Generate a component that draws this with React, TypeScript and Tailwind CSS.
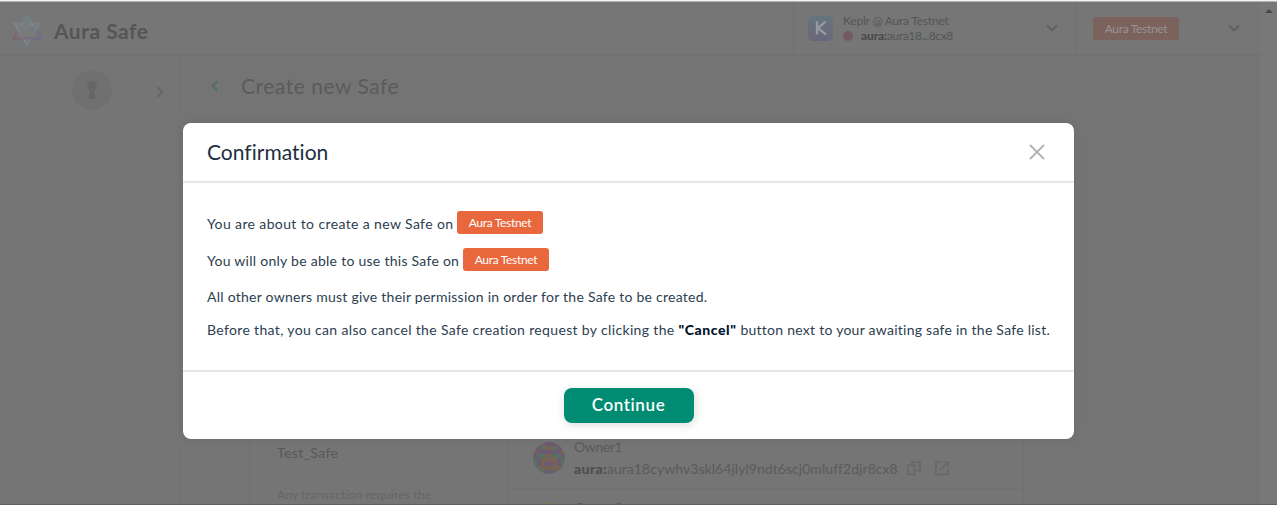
import type { ReactNode } from "react";

function Chevron({ className }: { className: string }) {
  return (
    <svg viewBox="0 0 12 8" className={className} fill="none" stroke="currentColor" strokeWidth="2">
      <path d="M0.8 1.2 L6 6.4 L11.2 1.2" />
    </svg>
  );
}

function AuraLogo() {
  return (
    <svg viewBox="0 0 30 32" className="mt-[5px] h-8 w-[30px] shrink-0" fill="none" strokeLinejoin="round">
      <defs>
        <linearGradient id="aura" x1="0" y1="0.3" x2="1" y2="0.7">
          <stop offset="0" stopColor="#8b8588" />
          <stop offset="0.5" stopColor="#828d90" />
          <stop offset="1" stopColor="#6c7d98" />
        </linearGradient>
        <linearGradient id="auraUp" x1="0.5" y1="0" x2="0.5" y2="1">
          <stop offset="0" stopColor="#6c8a89" />
          <stop offset="0.55" stopColor="#76808a" />
          <stop offset="1" stopColor="#7c6878" />
        </linearGradient>
      </defs>
      <path d="M15 30.5 L1.5 8 H28.5 Z" stroke="url(#aura)" strokeWidth="1.2" strokeDasharray="1.2 0.6" />
      <path d="M15 28.5 L3 9.3 H27 Z" stroke="url(#aura)" strokeWidth="1.1" strokeDasharray="1.2 0.6" />
      <path d="M15 26.5 L4.5 10.6 H25.5 Z" stroke="url(#aura)" strokeWidth="1" strokeDasharray="1.2 0.6" />
      <path d="M13.5 1 Q15 -0.5 16.5 1 L28.8 22.6 Q29 24 27.5 24 H2.5 Q1 24 1.2 22.6 Z" stroke="url(#auraUp)" strokeWidth="0.9" />
      <path d="M15 2.5 L26 22.8 H4 Z" stroke="url(#auraUp)" strokeWidth="1.1" />
      <path d="M15 5.5 L23.5 22 H6.5 Z" fill="#797b7b" />
      <path d="M5 16.5 L1.5 22.6 Q1 24 2.5 24 H9" stroke="#855e64" strokeWidth="1.2" />
      <path d="M25 16.5 L28.5 22.6 Q29 24 27.5 24 H19" stroke="#606f91" strokeWidth="1.2" />
    </svg>
  );
}

const PIXELS = [
  "ooopppoo",
  "ppgoogpp",
  "oppppppo",
  "pggooggp",
  "gpoooopg",
  "gpoppopg",
  "ogooooog",
  "oogppgoo",
];
const PIXEL_COLORS: Record<string, string> = { p: "#6c5a72", g: "#587064", o: "#766355" };
const GOLD_COLORS: Record<string, string> = { p: "#7a784c", g: "#6b6e52", o: "#77754d" };

function Identicon({ className, id, colors = PIXEL_COLORS }: { className: string; id: string; colors?: Record<string, string> }) {
  return (
    <svg viewBox="0 0 8 8" className={className} shapeRendering="crispEdges">
      <clipPath id={id}>
        <circle cx="4" cy="4" r="4" />
      </clipPath>
      <g clipPath={`url(#${id})`}>
        {PIXELS.map((row, y) =>
          row.split("").map((c, x) => <rect key={`${x}-${y}`} x={x} y={y} width="1" height="1" fill={colors[c]} />)
        )}
      </g>
    </svg>
  );
}

function NetworkTag({ className }: { className: string }) {
  return (
    <span className={`inline-flex h-[23px] w-[86px] shrink-0 items-center justify-center rounded-[3px] pt-px text-[12px] tracking-[-0.31px] ${className}`}>
      Aura Testnet
    </span>
  );
}

function Header() {
  return (
    <header className="flex h-[54px] shrink-0 border-b-2 border-[#727272] bg-[#767676]">
      <div className="flex flex-1 items-center pl-3">
        <AuraLogo />
        <span className="ml-3 pt-[5px] text-[21px] leading-6 font-bold tracking-[0.5px] text-[#555555]">Aura Safe</span>
      </div>
      <div className="flex w-[282px] items-center border-l border-[#707070] pl-[14px] text-[12px] text-[#535658]">
        <div className="flex h-[25px] w-[25px] items-center justify-center rounded-[5px] bg-gradient-to-b from-[#65757f] to-[#6b667a]">
          <svg viewBox="0 0 12 14" className="h-[14px] w-3" fill="none" stroke="#989b9e" strokeWidth="2.3">
            <path d="M2 .5 V13.5 M10.5 .5 L3 7.2 L11 13.5" />
          </svg>
        </div>
        <div className="ml-[10px] flex flex-col">
          <span className="leading-[15px] tracking-[-0.2px]">Keplr @ Aura Testnet</span>
          <span className="flex items-center leading-[15px]">
            <Identicon id="account" className="mr-2 h-[10px] w-[10px]" colors={{ p: "#755463", g: "#6b5f75", o: "#7b5959" }} />
            <b className="font-black tracking-[-0.13px] text-[#494b4d]">aura:</b>
            <span className="tracking-[-0.4px]">aura18...8cx8</span>
          </span>
        </div>
        <Chevron className="mr-[17px] ml-auto h-2 w-3 text-[#606060]" />
      </div>
      <div className="flex w-[185px] items-center border-l border-[#707070] pl-[17px]">
        <NetworkTag className="bg-[#7b625d] text-[#989491]" />
        <Chevron className="mr-5 ml-auto h-2 w-3 text-[#606060]" />
      </div>
    </header>
  );
}

function Sidebar() {
  return (
    <aside className="flex w-[180px] shrink-0 border-r border-[#727272] bg-[#757575]">
      <div className="mt-[14px] ml-[72px] flex h-10 w-10 shrink-0 items-center justify-center rounded-full bg-[#707070]">
        <svg viewBox="0 0 10 18" className="h-[18px] w-[10px]" fill="#666666">
          <path d="M5 0 A4.8 4.8 0 0 1 7 9.2 L8.5 18 H1.5 L3 9.2 A4.8 4.8 0 0 1 5 0 Z" />
        </svg>
      </div>
      <svg viewBox="0 0 8 12" className="mt-[30px] ml-[44px] h-3 w-2" fill="none" stroke="#666666" strokeWidth="1.8">
        <path d="M1.2 1.2 L6.3 6 L1.2 10.8" />
      </svg>
    </aside>
  );
}

function OwnerRow({ name, colors, children }: { name: string; colors?: Record<string, string>; children?: ReactNode }) {
  return (
    <div className="flex h-[61px] shrink-0 border-b-2 border-[#727272] pt-[13px] pl-6">
      <Identicon id={name} className="h-8 w-8 shrink-0" colors={colors} />
      <div className="-mt-[6px] ml-[9px] flex flex-col">
        <span className="leading-[22px] tracking-[-0.4px]">{name}</span>
        {children}
      </div>
    </div>
  );
}

function Owners() {
  return (
    <div className="flex flex-1 flex-col overflow-hidden border-l border-[#717171] text-[14px] text-[#5a5b5b]">
      <OwnerRow name="Owner1">
        <span className="flex items-center leading-[22px]">
          <b className="font-black tracking-[0.37px] text-[#4e4f50]">aura:</b>
          <span className="tracking-[0.05px]">aura18cywhv3skl64jlyl9ndt6scj0mluff2djr8cx8</span>
          <svg viewBox="0 0 16 16" className="-mt-[2px] ml-2 h-4 w-4" fill="none" stroke="#676767" strokeWidth="1.7" strokeLinejoin="round">
            <path d="M6 5 V2 H14 V10.5 H9.5 M2 5 H8.5 V14.5 H2 Z" />
          </svg>
          <svg viewBox="0 0 16 16" className="-mt-[2px] ml-3 h-4 w-4" fill="none" stroke="#676767" strokeWidth="1.6">
            <path d="M6.5 2 H2 V14.5 H14 V9.5 M9.5 2 H14 V6.5 M14 2 L5.5 10.5" />
          </svg>
        </span>
      </OwnerRow>
      <OwnerRow name="Owner2" colors={GOLD_COLORS} />
    </div>
  );
}

function Page() {
  return (
    <main className="flex flex-1 flex-col bg-[#747474]">
      <div className="flex h-[62px] shrink-0 items-center pl-[31px]">
        <svg viewBox="0 0 8 12" className="-mt-[2px] h-3 w-2" fill="none" stroke="#4f6d66" strokeWidth="2">
          <path d="M6.5 1.2 L1.8 6 L6.5 10.8" />
        </svg>
        <h1 className="-mt-[2px] ml-[22px] text-[21px] leading-6 tracking-[0.53px] text-[#5a5b5d]">Create new Safe</h1>
      </div>
      <div className="mt-[311px] ml-[70px] flex min-h-0 w-[774px] flex-1 border-x border-[#717171] bg-[#757575]">
        <div className="flex w-[257px] flex-col pt-[14px] pl-[26px]">
          <span className="text-[14px] leading-5 tracking-[0.38px] text-[#585959]">Test_Safe</span>
          <span className="mt-[22px] text-[12px] leading-5 tracking-[0.22px] text-[#656565]">Any transaction requires the</span>
        </div>
        <Owners />
      </div>
    </main>
  );
}

function Dialog() {
  return (
    <section role="dialog" className="absolute top-[123px] left-[183px] flex h-[316px] w-[891px] flex-col rounded-lg bg-white text-[#001428] shadow-[0_0_10px_rgba(0,0,0,0.08)]">
      <div className="flex h-[60px] shrink-0 items-center justify-between border-b-2 border-[#e8e7e6] pr-[29px] pl-6">
        <h2 className="text-[21px] leading-6 tracking-[0.02px] text-[#1c2f42]">Confirmation</h2>
        <svg viewBox="0 0 16 16" className="h-4 w-4" fill="none" stroke="#b2b5b2" strokeWidth="2" strokeLinecap="round">
          <path d="M1.5 1.5 L14.5 14.5 M14.5 1.5 L1.5 14.5" />
        </svg>
      </div>
      <div className="flex flex-1 flex-col pt-7 pl-6 text-[14px] leading-5 text-[#2c3e50]">
        <p className="flex h-[23px] items-center gap-[3px]">
          <span className="w-[247px] pt-[3px] whitespace-nowrap tracking-[0.38px]">You are about to create a new Safe on</span>
          <NetworkTag className="bg-[#e8673c] text-white" />
        </p>
        <p className="mt-[14px] flex h-[23px] items-center gap-[3px]">
          <span className="w-[253px] pt-[3px] whitespace-nowrap tracking-[0.27px]">You will only be able to use this Safe on</span>
          <NetworkTag className="bg-[#e8673c] text-white" />
        </p>
        <p className="mt-4 tracking-[0.255px]">All other owners must give their permission in order for the Safe to be created.</p>
        <p className="mt-[13px] whitespace-nowrap tracking-[0.345px]">
          Before that, you can also cancel the Safe creation request by clicking the{" "}
          <b className="font-black tracking-[0.57px] text-[#001428]">"Cancel"</b>{" "}
          <span className="tracking-[0.26px]">button next to your awaiting safe in the Safe list.</span>
        </p>
      </div>
      <div className="flex h-[69px] shrink-0 justify-center border-t-2 border-[#e8e7e6] pt-4">
        <button className="h-[35px] w-[130px] rounded-lg bg-[#008c73] pb-[2px] text-[17px] leading-5 font-semibold tracking-[0.6px] text-white shadow-[1px_2px_10px_rgba(40,54,61,0.18)]">
          Continue
        </button>
      </div>
    </section>
  );
}

export default function App() {
  return (
    <div className="relative flex h-[505px] w-[1277px] flex-col overflow-hidden border-b border-[#626262] bg-[#757575] font-['Lato',sans-serif]">
      <div className="h-[2px] shrink-0 border-b border-[#b4b6b5] bg-[#f1f3f2]" />
      <div className="flex min-h-0 flex-1">
        <div className="flex w-[1260px] flex-col">
          <Header />
          <div className="flex min-h-0 flex-1">
            <Sidebar />
            <Page />
          </div>
        </div>
        <div className="flex w-[17px] justify-center bg-[#787878] pt-[7px]">
          <svg viewBox="0 0 8 4" className="h-1 w-2" fill="#484848">
            <path d="M4 0 L8 4 H0 Z" />
          </svg>
        </div>
      </div>
      <Dialog />
    </div>
  );
}
